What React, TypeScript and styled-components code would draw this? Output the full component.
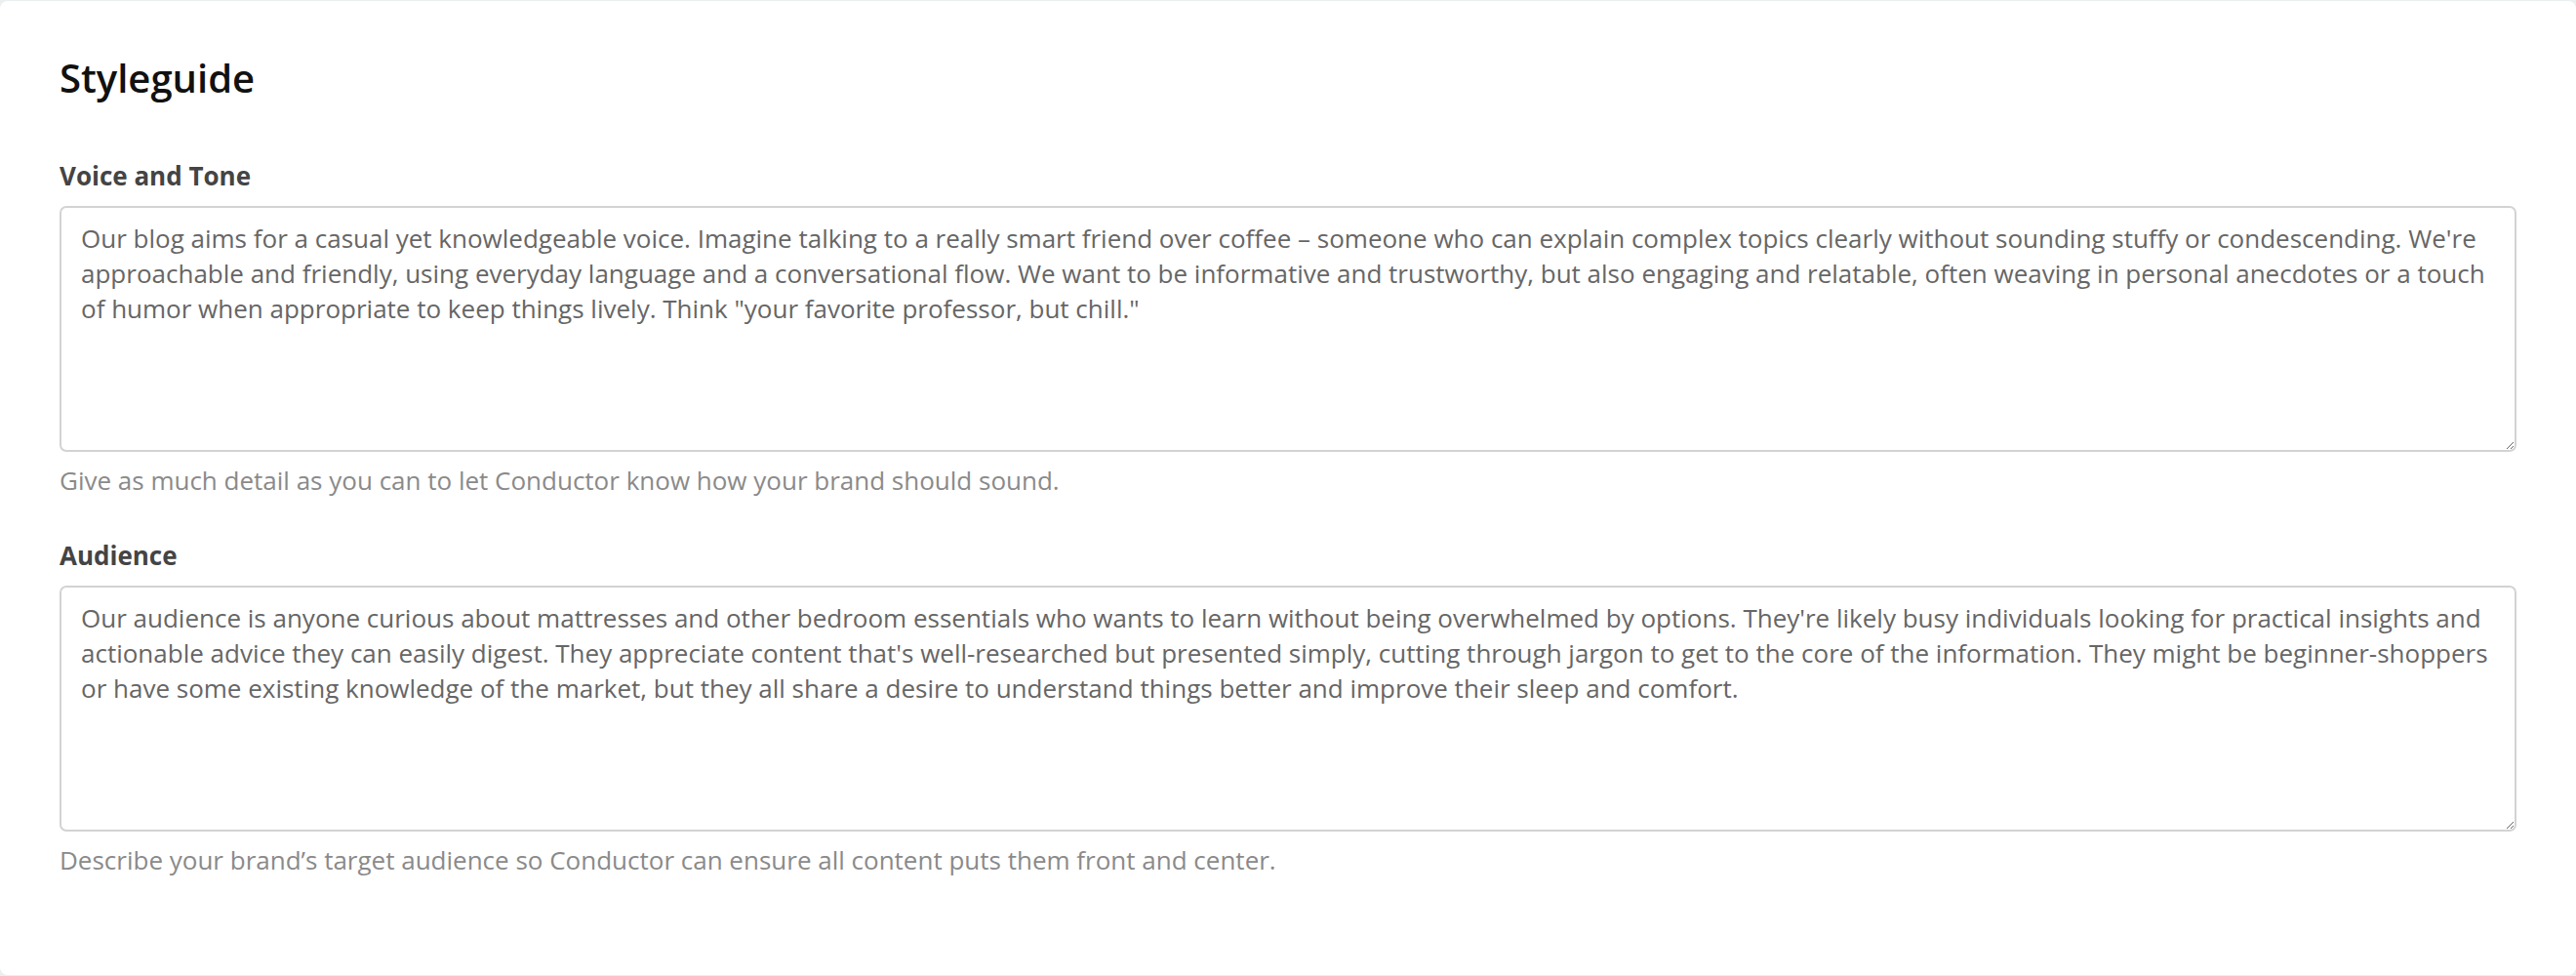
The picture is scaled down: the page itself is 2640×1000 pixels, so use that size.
import React from "react";
import styled, { createGlobalStyle } from "styled-components";

const GlobalStyle = createGlobalStyle`
  html, body {
    margin: 0;
    padding: 0;
    background: #eceff0;
  }
  body {
    font-family: "Open Sans", "Noto Sans", Arial, sans-serif;
    -webkit-font-smoothing: antialiased;
  }
  * {
    box-sizing: border-box;
  }
`;

const Card = styled.main`
  margin: 1px 0 0;
  height: 998px;
  background: #ffffff;
  border-radius: 8px;
  padding: 55px 61px 0;
  display: flex;
  flex-direction: column;
`;

const Title = styled.h1`
  margin: 0 0 56px;
  font-size: 40px;
  line-height: 48px;
  font-weight: 600;
  color: #111111;
`;

const Field = styled.section`
  display: flex;
  flex-direction: column;
  & + & {
    margin-top: 39px;
  }
`;

const Label = styled.label`
  font-size: 26px;
  line-height: 40px;
  font-weight: 700;
  color: #444444;
  margin-bottom: 11px;
`;

const TextArea = styled.textarea`
  display: block;
  width: 100%;
  height: 252px;
  margin: 0;
  padding: 13px 20px;
  border: 2px solid #d3d3d3;
  border-radius: 7px;
  background: #ffffff;
  font-family: "Open Sans", "Noto Sans", Arial, sans-serif;
  font-size: 26px;
  line-height: 36px;
  color: #666666;
  resize: vertical;
  outline: none;
`;

const Hint = styled.p`
  margin: 11px 0 0;
  font-size: 26px;
  line-height: 36px;
  color: #8a8a8a;
`;

type FieldSpec = {
  id: string;
  label: string;
  value: string;
  hint: string;
};

const fields: FieldSpec[] = [
  {
    id: "voice",
    label: "Voice and Tone",
    value:
      "Our blog aims for a casual yet knowledgeable voice. Imagine talking to a really smart friend over coffee – someone who can explain complex topics clearly without sounding stuffy or condescending. We're approachable and friendly, using everyday language and a conversational flow. We want to be informative and trustworthy, but also engaging and relatable, often weaving in personal anecdotes or a touch of humor when appropriate to keep things lively. Think \"your favorite professor, but chill.\"",
    hint: "Give as much detail as you can to let Conductor know how your brand should sound.",
  },
  {
    id: "audience",
    label: "Audience",
    value:
      "Our audience is anyone curious about mattresses and other bedroom essentials who wants to learn without being overwhelmed by options. They're likely busy individuals looking for practical insights and actionable advice they can easily digest. They appreciate content that's well-researched but presented simply, cutting through jargon to get to the core of the information. They might be beginner-shoppers or have some existing knowledge of the market, but they all share a desire to understand things better and improve their sleep and comfort.",
    hint: "Describe your brand’s target audience so Conductor can ensure all content puts them front and center.",
  },
];

export default function App() {
  return (
    <>
      <GlobalStyle />
      <Card>
        <Title>Styleguide</Title>
        {fields.map((f) => (
          <Field key={f.id}>
            <Label htmlFor={f.id}>{f.label}</Label>
            <TextArea id={f.id} defaultValue={f.value} spellCheck={false} />
            <Hint>{f.hint}</Hint>
          </Field>
        ))}
      </Card>
    </>
  );
}
